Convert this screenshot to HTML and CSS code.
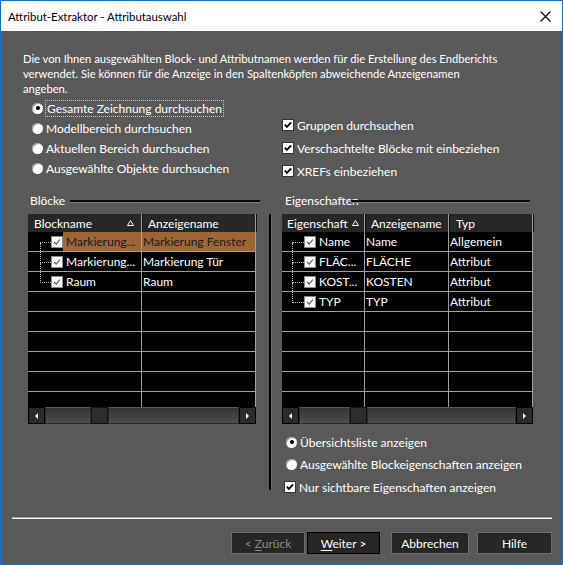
FILE: index.html
```html
<!DOCTYPE html>
<html>
<head>
  <meta charset="utf-8">
  <title>Attribut-Extraktor - Attributauswahl</title>
  <link rel="stylesheet" href="styles.css">
</head>
<body>
  <div class="window">
    <header class="titlebar">
      <span>Attribut-Extraktor - Attributauswahl</span>
      <svg class="close" viewBox="0 0 11 11"><path d="M0.5 0.5 L10.5 10.5 M10.5 0.5 L0.5 10.5" stroke="#000" stroke-width="1.1" fill="none"/></svg>
    </header>

    <main class="content">
      <p class="intro">Die von Ihnen ausgewählten Block- und Attributnamen werden für die Erstellung des Endberichts<br>
        verwendet. Sie können für die Anzeige in den Spaltenköpfen abweichende Anzeigenamen<br>
        angeben.</p>

      <div class="options">
        <div class="radios">
          <label class="opt"><span class="radio on"></span><span class="focus">Gesamte Zeichnung durchsuchen</span></label>
          <label class="opt"><span class="radio"></span>Modellbereich durchsuchen</label>
          <label class="opt"><span class="radio"></span>Aktuellen Bereich durchsuchen</label>
          <label class="opt"><span class="radio"></span>Ausgewählte Objekte durchsuchen</label>
        </div>
        <div class="checks">
          <label class="opt"><span class="box"><svg viewBox="0 0 11 11"><path d="M2 5 L4.3 7.5 L9 2.5" stroke="#000" stroke-width="2" fill="none"/></svg></span>Gruppen durchsuchen</label>
          <label class="opt"><span class="box"><svg viewBox="0 0 11 11"><path d="M2 5 L4.3 7.5 L9 2.5" stroke="#000" stroke-width="2" fill="none"/></svg></span>Verschachtelte Blöcke mit einbeziehen</label>
          <label class="opt"><span class="box"><svg viewBox="0 0 11 11"><path d="M2 5 L4.3 7.5 L9 2.5" stroke="#000" stroke-width="2" fill="none"/></svg></span>XREFs einbeziehen</label>
        </div>
      </div>

      <div class="groups">
        <section class="group blocks">
          <div class="group-title"><span>Blöcke</span><i class="rule"></i></div>
          <div class="grid">
            <div class="head">
              <span class="c1">Blockname<svg class="sort" viewBox="0 0 7 6"><path d="M0.5 5.5 L3.5 0.5 L6.5 5.5 Z" stroke="#fff" stroke-width="1" fill="none"/></svg></span>
              <span class="c2">Anzeigename</span>
            </div>
            <div class="rows">
              <div class="row first sel">
                <span class="c1 tree"><i class="branch"></i><span class="tick"><svg viewBox="0 0 12 12"><path d="M2.5 6 L5 8.5 L9.5 3" stroke="#555" stroke-width="1.3" fill="none"/></svg></span><span class="name">Markierung...</span></span>
                <span class="c2">Markierung Fenster</span>
              </div>
              <div class="row">
                <span class="c1 tree"><i class="branch"></i><span class="tick"><svg viewBox="0 0 12 12"><path d="M2.5 6 L5 8.5 L9.5 3" stroke="#555" stroke-width="1.3" fill="none"/></svg></span><span class="name">Markierung...</span></span>
                <span class="c2">Markierung Tür</span>
              </div>
              <div class="row last">
                <span class="c1 tree"><i class="branch"></i><span class="tick"><svg viewBox="0 0 12 12"><path d="M2.5 6 L5 8.5 L9.5 3" stroke="#555" stroke-width="1.3" fill="none"/></svg></span><span class="name">Raum</span></span>
                <span class="c2">Raum</span>
              </div>
              <div class="row"><span class="c1"></span><span class="c2"></span></div>
              <div class="row"><span class="c1"></span><span class="c2"></span></div>
              <div class="row"><span class="c1"></span><span class="c2"></span></div>
              <div class="row"><span class="c1"></span><span class="c2"></span></div>
              <div class="row"><span class="c1"></span><span class="c2"></span></div>
              <div class="row"><span class="c1"></span><span class="c2"></span></div>
            </div>
            <div class="scroll">
              <span class="arrow left"></span>
              <span class="track"><span class="seg" style="width:46px"></span><span class="thumb"></span><span class="seg rest"></span></span>
              <span class="arrow right"></span>
            </div>
          </div>
        </section>

        <div class="divider"></div>

        <section class="group props">
          <div class="group-title"><span>Eigenschaften</span><i class="rule"></i></div>
          <div class="grid">
            <div class="head">
              <span class="c1">Eigenschaft<svg class="sort" viewBox="0 0 7 6"><path d="M0.5 5.5 L3.5 0.5 L6.5 5.5 Z" stroke="#fff" stroke-width="1" fill="none"/></svg></span>
              <span class="c2">Anzeigename</span>
              <span class="c3">Typ</span>
            </div>
            <div class="rows">
              <div class="row first">
                <span class="c1 tree"><i class="branch"></i><span class="tick"><svg viewBox="0 0 12 12"><path d="M2.5 6 L5 8.5 L9.5 3" stroke="#555" stroke-width="1.3" fill="none"/></svg></span><span class="name">Name</span></span>
                <span class="c2">Name</span>
                <span class="c3">Allgemein</span>
              </div>
              <div class="row">
                <span class="c1 tree"><i class="branch"></i><span class="tick"><svg viewBox="0 0 12 12"><path d="M2.5 6 L5 8.5 L9.5 3" stroke="#555" stroke-width="1.3" fill="none"/></svg></span><span class="name">FLÄC...</span></span>
                <span class="c2">FLÄCHE</span>
                <span class="c3">Attribut</span>
              </div>
              <div class="row">
                <span class="c1 tree"><i class="branch"></i><span class="tick"><svg viewBox="0 0 12 12"><path d="M2.5 6 L5 8.5 L9.5 3" stroke="#555" stroke-width="1.3" fill="none"/></svg></span><span class="name">KOST...</span></span>
                <span class="c2">KOSTEN</span>
                <span class="c3">Attribut</span>
              </div>
              <div class="row last">
                <span class="c1 tree"><i class="branch"></i><span class="tick"><svg viewBox="0 0 12 12"><path d="M2.5 6 L5 8.5 L9.5 3" stroke="#555" stroke-width="1.3" fill="none"/></svg></span><span class="name">TYP</span></span>
                <span class="c2">TYP</span>
                <span class="c3">Attribut</span>
              </div>
              <div class="row"><span class="c1"></span><span class="c2"></span><span class="c3"></span></div>
              <div class="row"><span class="c1"></span><span class="c2"></span><span class="c3"></span></div>
              <div class="row"><span class="c1"></span><span class="c2"></span><span class="c3"></span></div>
              <div class="row"><span class="c1"></span><span class="c2"></span><span class="c3"></span></div>
              <div class="row"><span class="c1"></span><span class="c2"></span><span class="c3"></span></div>
            </div>
            <div class="scroll">
              <span class="arrow left"></span>
              <span class="track"><span class="seg" style="width:51px"></span><span class="thumb"></span><span class="seg rest"></span></span>
              <span class="arrow right"></span>
            </div>
          </div>

          <div class="view-opts">
            <label class="opt"><span class="radio on"></span>Übersichtsliste anzeigen</label>
            <label class="opt"><span class="radio"></span>Ausgewählte Blockeigenschaften anzeigen</label>
            <label class="opt"><span class="box"><svg viewBox="0 0 11 11"><path d="M2 5 L4.3 7.5 L9 2.5" stroke="#000" stroke-width="2" fill="none"/></svg></span>Nur sichtbare Eigenschaften anzeigen</label>
          </div>
        </section>
      </div>

      <div class="sep"></div>

      <div class="buttons">
        <button class="btn back" disabled>&lt; <u>Z</u>urück</button>
        <button class="btn next default"><u>W</u>eiter &gt;</button>
        <button class="btn cancel">Abbrechen</button>
        <button class="btn help">Hilfe</button>
      </div>
    </main>
  </div>
</body>
</html>
```

FILE: styles.css
```css
* {
  box-sizing: border-box;
}
html, body {
  margin: 0;
  padding: 0;
  background: #595959;
}
body {
  font-family: Lato, "Open Sans", sans-serif;
  font-size: 12px;
  color: #fff;
}
.window {
  width: 563px;
  height: 565px;
  border: 1px solid #1d6bcc;
  background: #595959;
  display: flex;
  flex-direction: column;
  overflow: hidden;
}

/* title bar */
.titlebar {
  height: 30px;
  flex: none;
  background: #fff;
  color: #000;
  display: flex;
  align-items: center;
  justify-content: space-between;
  padding: 0 11px 0 7px;
  font-size: 11.4px;
}
.close {
  width: 11px;
  height: 11px;
}

.content {
  flex: 1;
  display: flex;
  flex-direction: column;
  padding: 20px 10px 0 11px;
}
.intro {
  margin: 0 0 0 11px;
  font-size: 11.2px;
  line-height: 15px;
  white-space: nowrap;
}

/* radio buttons and check boxes */
.options {
  display: flex;
  margin-top: 4px;
}
.radios {
  width: 270px;
  padding-left: 20px;
  display: flex;
  flex-direction: column;
  gap: 4px;
}
.checks {
  display: flex;
  flex-direction: column;
  gap: 7px;
  margin-top: 17px;
}
.opt {
  height: 16px;
  display: flex;
  align-items: center;
  gap: 3px;
  white-space: nowrap;
}
.radio {
  flex: none;
  width: 11px;
  height: 11px;
  border-radius: 50%;
  background: radial-gradient(circle at 60% 60%, #fff 55%, #d6d6d6 100%);
  box-shadow: inset 1px 1px 0 #9a9a9a;
  display: flex;
  align-items: center;
  justify-content: center;
}
.radio.on::after {
  content: "";
  width: 4px;
  height: 4px;
  border-radius: 50%;
  background: #000;
}
.focus {
  outline: 1px dotted #c8c8c8;
  outline-offset: 0;
  padding: 0 1px;
}
.box {
  flex: none;
  width: 12px;
  height: 12px;
  background: #fff;
  border: 1px solid #333;
  display: flex;
}
.box svg {
  width: 10px;
  height: 10px;
}

/* the two group boxes */
.groups {
  display: flex;
  margin-top: 14px;
  padding-left: 16px;
}
.group-title {
  height: 15px;
  display: flex;
  align-items: center;
}
.group-title span {
  padding-left: 2px;
}
.rule {
  flex: 1;
  height: 2px;
  background: #0a0a0a;
  box-shadow: 0 1px 0 #7a7a7a;
  margin-left: 5px;
}
.blocks {
  width: 232px;
}
.props {
  width: 251px;
}
.props .group-title span {
  padding-left: 3px;
}
.props .rule {
  margin-left: -8px;
  margin-right: 3px;
}
.divider {
  width: 2px;
  height: 276px;
  margin: 21px 11px 0 9px;
  background: #000;
  box-shadow: 1px 0 0 #6a6a6a;
}

/* list grids */
.grid {
  width: 228px;
  height: 210px;
  margin-top: 6px;
  background: #000;
  display: flex;
  flex-direction: column;
}
.props .grid {
  width: 251px;
}
.head {
  height: 18px;
  flex: none;
  display: flex;
  background: #272727;
}
.head > span {
  display: flex;
  align-items: center;
  justify-content: space-between;
  padding: 0 7px 0 6px;
  border-right: 1px solid #9a9a9a;
  box-shadow: 1px 0 0 #111;
}
.props .head .c1 { padding-left: 5px; padding-right: 5px; }
.props .head .c3 { padding-left: 7px; }
.sort {
  width: 7px;
  height: 6px;
}
.rows {
  flex: 1;
  overflow: hidden;
}
.row {
  height: 20px;
  display: flex;
  border-bottom: 1px solid #a0a0a0;
}
.row > span {
  display: flex;
  align-items: center;
  padding-left: 1px;
  white-space: nowrap;
  overflow: hidden;
  border-right: 1px solid #a0a0a0;
}
.blocks .c1, .blocks .c2 { width: 114px; }
.props .c1 { width: 83px; }
.props .c2, .props .c3 { width: 84px; }

/* tree column */
.row > .tree {
  padding-left: 12px;
}
.props .row > .tree {
  padding-left: 10px;
}
.branch {
  flex: none;
  width: 11px;
  align-self: stretch;
  display: flex;
  flex-direction: column;
}
.props .branch {
  width: 12px;
}
.branch::before {
  content: "";
  height: 10px;
  border-left: 1px dotted #bdbdbd;
  border-bottom: 1px dotted #bdbdbd;
}
.branch::after {
  content: "";
  flex: 1;
  border-left: 1px dotted #bdbdbd;
}
.first .branch::before { border-left: 0; }
.last .branch::after { border-left: 0; }
.tick {
  flex: none;
  width: 12px;
  height: 12px;
  background: #fafafa;
  border: 1px solid #8a8a8a;
  display: flex;
}
.tick svg {
  width: 10px;
  height: 10px;
}
.name {
  flex: 1;
  align-self: stretch;
  display: flex;
  align-items: center;
  padding-left: 3px;
}
.sel .name, .sel .c2 {
  background: #9e6636;
  color: #1a1a1a;
}

/* horizontal scroll bar */
.scroll {
  height: 17px;
  flex: none;
  display: flex;
  background: #000;
}
.arrow {
  width: 17px;
  flex: none;
  background: #2b2b2b;
  border: 1px solid #000;
  display: flex;
  align-items: center;
  justify-content: center;
}
.arrow::after {
  content: "";
  border-top: 3px solid transparent;
  border-bottom: 3px solid transparent;
}
.arrow.left::after { border-right: 3px solid #fff; }
.arrow.right::after { border-left: 3px solid #fff; }
.track {
  flex: 1;
  display: flex;
}
.seg {
  background: linear-gradient(#333, #4e4e4e);
  border: 1px solid #2a2a2a;
  border-top-color: #555;
}
.seg.rest {
  flex: 1;
}
.thumb {
  width: 17px;
  flex: none;
  background: #2c2c2c;
  border: 1px solid #111;
}

.view-opts {
  display: flex;
  flex-direction: column;
  margin-top: 10px;
  padding-left: 4px;
  gap: 6px;
}
.view-opts .opt:last-child {
  margin-left: -2px;
  margin-top: 1px;
}

/* bottom */
.sep {
  height: 2px;
  margin-top: 22px;
  border-top: 1px solid #a8a8a8;
  border-bottom: 1px solid #f4f4f4;
}
.buttons {
  display: flex;
  justify-content: flex-end;
  margin-top: 13px;
}
.btn {
  height: 22px;
  background: #262626;
  border: 1px solid #6c6c6c;
  color: #fff;
  font: inherit;
  padding: 0;
}
.btn u {
  text-decoration-thickness: 1px;
  text-underline-offset: 2px;
}
.back {
  width: 74px;
  color: #8a8a8a;
  margin-right: 2px;
}
.next {
  width: 73px;
  border-color: #000;
  margin-right: 11px;
}
.cancel {
  width: 78px;
  margin-right: 8px;
}
.help {
  width: 75px;
}
```
